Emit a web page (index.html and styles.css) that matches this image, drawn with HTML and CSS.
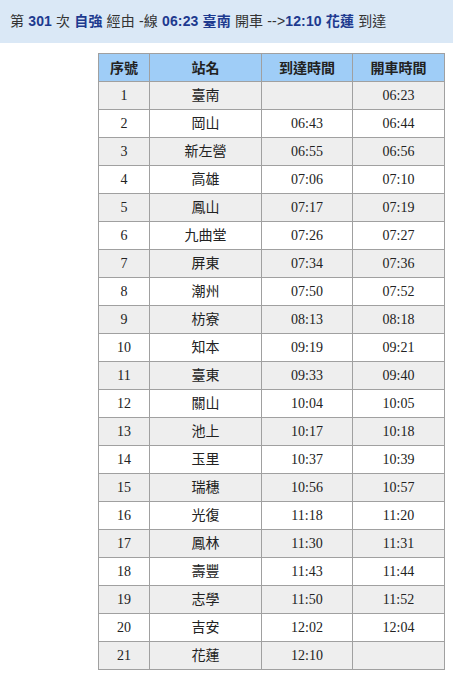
FILE: index.html
```html
<!DOCTYPE html>
<html lang="zh-Hant">
<head>
<meta charset="utf-8">
<link rel="stylesheet" href="styles.css">
</head>
<body>
<div class="bar">第 <b>301</b> 次 <b>自強</b> 經由 -線 <b>06:23</b> <b>臺南</b> 開車 --&gt;<b>12:10</b> <b>花蓮</b> 到達</div>
<table class="tt">
<thead>
<tr><th class="c1">序號</th><th class="c2">站名</th><th class="c3">到達時間</th><th class="c4">開車時間</th></tr>
</thead>
<tbody>
<tr><td>1</td><td>臺南</td><td></td><td>06:23</td></tr>
<tr><td>2</td><td>岡山</td><td>06:43</td><td>06:44</td></tr>
<tr><td>3</td><td>新左營</td><td>06:55</td><td>06:56</td></tr>
<tr><td>4</td><td>高雄</td><td>07:06</td><td>07:10</td></tr>
<tr><td>5</td><td>鳳山</td><td>07:17</td><td>07:19</td></tr>
<tr><td>6</td><td>九曲堂</td><td>07:26</td><td>07:27</td></tr>
<tr><td>7</td><td>屏東</td><td>07:34</td><td>07:36</td></tr>
<tr><td>8</td><td>潮州</td><td>07:50</td><td>07:52</td></tr>
<tr><td>9</td><td>枋寮</td><td>08:13</td><td>08:18</td></tr>
<tr><td>10</td><td>知本</td><td>09:19</td><td>09:21</td></tr>
<tr><td>11</td><td>臺東</td><td>09:33</td><td>09:40</td></tr>
<tr><td>12</td><td>關山</td><td>10:04</td><td>10:05</td></tr>
<tr><td>13</td><td>池上</td><td>10:17</td><td>10:18</td></tr>
<tr><td>14</td><td>玉里</td><td>10:37</td><td>10:39</td></tr>
<tr><td>15</td><td>瑞穗</td><td>10:56</td><td>10:57</td></tr>
<tr><td>16</td><td>光復</td><td>11:18</td><td>11:20</td></tr>
<tr><td>17</td><td>鳳林</td><td>11:30</td><td>11:31</td></tr>
<tr><td>18</td><td>壽豐</td><td>11:43</td><td>11:44</td></tr>
<tr><td>19</td><td>志學</td><td>11:50</td><td>11:52</td></tr>
<tr><td>20</td><td>吉安</td><td>12:02</td><td>12:04</td></tr>
<tr><td>21</td><td>花蓮</td><td>12:10</td><td></td></tr>
</tbody>
</table>
</body>
</html>
```

FILE: styles.css
```css
html, body {
  margin: 0;
  padding: 0;
  background: #ffffff;
}
.bar {
  background: #dae8f6;
  height: 43px;
  line-height: 43px;
  padding-left: 10px;
  font-family: "Liberation Sans", "Noto Sans CJK TC", sans-serif;
  font-size: 14px;
  letter-spacing: 0.15px;
  color: #333333;
  white-space: nowrap;
}
.bar b {
  color: #1d3a8f;
  font-weight: bold;
}
.tt {
  margin: 10px 0 0 98px;
  border-collapse: collapse;
  width: 345px;
  table-layout: fixed;
  font-family: "Liberation Serif", "Noto Sans CJK TC", serif;
  font-size: 14px;
  color: #222222;
}
.tt th, .tt td {
  border: 1px solid #a0a0a0;
  text-align: center;
  height: 27px;
  padding: 0;
  line-height: 16px;
}
.tt th {
  background: #9fcdf7;
  font-family: "Liberation Sans", "Noto Sans CJK TC", sans-serif;
  font-weight: bold;
  font-size: 14px;
  color: #222222;
}
.c1 { width: 50px; }
.c2 { width: 111px; }
.c3 { width: 90px; }
.c4 { width: 91px; }
.tt tbody tr:nth-child(odd) td {
  background: #eeeeee;
}
.tt tbody tr:nth-child(even) td {
  background: #ffffff;
}
```
